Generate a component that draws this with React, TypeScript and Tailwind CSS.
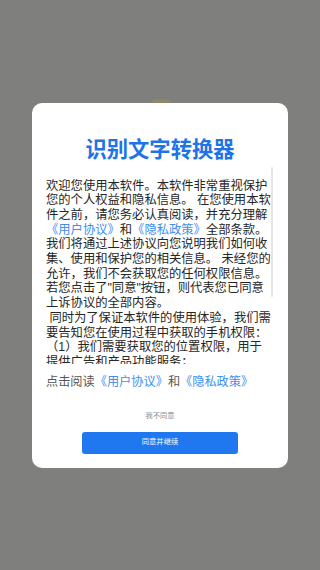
import React from "react";

const font = { fontFamily: '"Liberation Sans", "Noto Sans CJK SC", sans-serif' };

function Link({ children }: { children: React.ReactNode }) {
  return <span className="text-[#3d8ff0]">{children}</span>;
}

export default function App() {
  return (
    <div
      className="relative flex h-[570px] w-[320px] items-center justify-center overflow-hidden bg-[#7f7f7e]"
      style={font}
    >
      {/* faint thing behind the dialog */}
      <div className="absolute left-[152px] top-[100px] h-[3px] w-[18px] rounded-full bg-[#9a8a5c] blur-[1px]" />

      <div className="relative flex h-[365px] w-[256px] flex-col rounded-[10px] bg-white px-[14px] pt-[36px] pb-[14px]">
        <h1 className="h-[22px] text-center text-[21.3px] font-bold leading-[22px] text-[#1d74e7]">
          识别文字转换器
        </h1>

        {/* scrolling agreement text */}
        <div className="relative mt-[6px] mb-[3px] h-[197px] overflow-hidden">
          <div className="absolute right-[1px] top-0 h-[130px] w-[2px] rounded-full bg-[#e6e6e6]" />
          <p className="w-[225px] pt-[12px] text-[12.3px] leading-[14.7px] text-[#262626]">
            欢迎您使用本软件。本软件非常重视保护您的个人权益和隐私信息。 在您使用本软件之前，请您务必认真阅读，并充分理解
            <Link>《用户协议》</Link>和<Link>《隐私政策》</Link>
            全部条款。我们将通过上述协议向您说明我们如何收集、使用和保护您的相关信息。 未经您的允许，我们不会获取您的任何权限信息。若您点击了"同意"按钮，则代表您已同意上诉协议的全部内容。
            <br />
            {"\u00a0"}同时为了保证本软件的使用体验，我们需要告知您在使用过程中获取的手机权限：
            <br />
            （1）我们需要获取您的位置权限，用于提供广告和产品功能服务；
            <br />
            （2）我们需要获取您的存储权限，用于保存识别结果和图片文件；
            <br />
            （3）我们需要获取您的相机权限，用于拍照识别文字。
          </p>
        </div>

        <p className="mt-[8px] text-[12.2px] leading-[15px] text-[#555555]">
          点击阅读<Link>《用户协议》</Link>和<Link>《隐私政策》</Link>
        </p>

        <div className="mt-[21px] text-center text-[7.3px] leading-[10px] text-[#8a8a8a]">我不同意</div>

        <button className="mx-auto mt-[11px] flex h-[22px] w-[156px] items-center justify-center rounded-[3px] bg-[#1f78ef] text-[7.3px] text-white">
          同意并继续
        </button>
      </div>
    </div>
  );
}
